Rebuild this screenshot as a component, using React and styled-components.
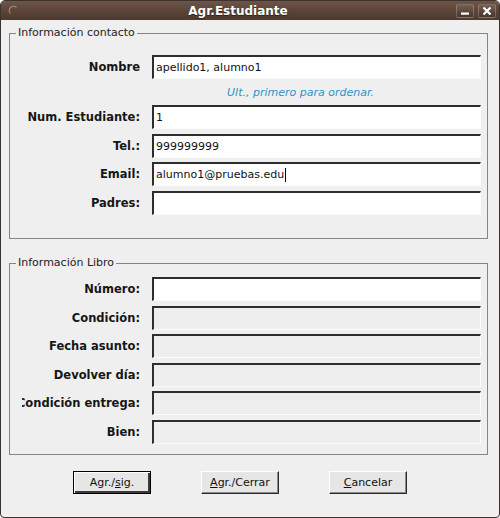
import React from "react";
import styled, { createGlobalStyle, css } from "styled-components";

const GlobalStyle = createGlobalStyle`
  html, body {
    margin: 0;
    padding: 0;
    background: #ffffff;
  }
  body {
    font-family: "DejaVu Sans", "Noto Sans", sans-serif;
    font-size: 11px;
    color: #1a1a1a;
  }
`;

const Window = styled.div`
  width: 500px;
  height: 518px;
  box-sizing: border-box;
  display: flex;
  flex-direction: column;
  border: 1px solid #3b3330;
  border-radius: 5px 5px 4px 4px;
  overflow: hidden;
  background: #efefef;
`;

const TitleBar = styled.div`
  height: 19px;
  flex: none;
  display: flex;
  align-items: center;
  padding: 0 3px 0 7px;
  background: linear-gradient(#6d5548, #584236 60%, #4e3a30);
`;

const MenuIcon = styled.svg`
  width: 12px;
  height: 12px;
  flex: none;
`;

const Title = styled.div`
  flex: 1;
  text-align: center;
  color: #ffffff;
  font-weight: bold;
  font-size: 12px;
  text-shadow: 0 1px 1px rgba(0, 0, 0, 0.5);
`;

const Controls = styled.div`
  display: flex;
  gap: 4px;
`;

const ControlButton = styled.div`
  width: 18px;
  height: 14px;
  box-sizing: border-box;
  display: flex;
  align-items: center;
  justify-content: center;
  border: 1px solid rgba(255, 255, 255, 0.22);
  border-radius: 2px;
  background: linear-gradient(rgba(255, 255, 255, 0.1), rgba(0, 0, 0, 0.12));
`;

const Body = styled.div`
  flex: 1;
  display: flex;
  flex-direction: column;
  padding: 6px 11px 0 8px;
`;

const Group = styled.fieldset`
  margin: 0;
  min-width: 0;
  border: 1px solid #858585;
  padding: ${(p) => p.$pad};
  & + & {
    margin-top: 17.5px;
  }
`;

const Legend = styled.legend`
  padding: 0 2px;
  margin-left: -2px;
  font-size: 11px;
  line-height: 14px;
  color: #222;
`;

const Rows = styled.div`
  display: flex;
  flex-direction: column;
  gap: 4.5px;
  padding-left: 4px;
`;

const Row = styled.div`
  display: grid;
  grid-template-columns: 118px 1fr;
  column-gap: 12px;
`;

const Label = styled.div`
  display: flex;
  justify-content: flex-end;
  align-items: center;
  overflow: hidden;
  white-space: nowrap;
  font-weight: bold;
  font-size: 11.5px;
  color: #161616;
`;

const Field = styled.div`
  height: 24px;
  box-sizing: border-box;
  display: flex;
  align-items: center;
  padding: 0 2px;
  border-style: solid;
  border-width: 2px 1px 1px 2px;
  border-color: #2e2e2e #fbfbfb #fbfbfb #2e2e2e;
  background: ${(p) => (p.$disabled ? "#eeeeee" : "#ffffff")};
  font-size: 11px;
  color: #111;
  white-space: nowrap;
  overflow: hidden;
`;

const Caret = styled.span`
  display: inline-block;
  width: 1px;
  height: 14px;
  margin-left: 1px;
  background: #000;
`;

const Hint = styled.div`
  grid-column: 2;
  height: 17px;
  line-height: 17px;
  text-align: center;
  padding-right: 32px;
  font-style: italic;
  font-size: 11px;
  color: #2f92c9;
`;

const ButtonRow = styled.div`
  display: flex;
  gap: 50px;
  margin-top: 16.5px;
  padding-left: 64px;
`;

const Button = styled.button`
  width: 78px;
  height: 23px;
  box-sizing: border-box;
  padding: 0;
  font-family: inherit;
  font-size: 11px;
  color: #111;
  background: #e6e6e6;
  border: 1px solid;
  border-color: #ffffff #2a2a2a #2a2a2a #ffffff;
  box-shadow: inset -1px -1px 0 #8a8a8a;
  ${(p) =>
    p.$default &&
    css`
      border-color: #000;
      box-shadow: inset 1px 1px 0 #fff, inset -2px -2px 0 #3a3a3a;
    `}
`;

const Mnemonic = styled.span`
  text-decoration: underline;
`;

const contactRows = [
  { label: "Num. Estudiante:", value: "1" },
  { label: "Tel.:", value: "999999999" },
  { label: "Email:", value: "alumno1@pruebas.edu", caret: true },
  { label: "Padres:", value: "" },
];

const bookRows = [
  { label: "Número:", disabled: false },
  { label: "Condición:", disabled: true },
  { label: "Fecha asunto:", disabled: true },
  { label: "Devolver día:", disabled: true },
  { label: "Condición entrega:", disabled: true },
  { label: "Bien:", disabled: true },
];

const App = () => {
  return (
    <>
      <GlobalStyle />
      <Window>
        <TitleBar>
          <MenuIcon viewBox="0 0 12 12">
            <path
              d="M2.5 8.5 A4 4 0 0 1 8.5 2.5"
              fill="none"
              stroke="rgba(255,255,255,0.35)"
              strokeWidth="1.2"
            />
          </MenuIcon>
          <Title>Agr.Estudiante</Title>
          <Controls>
            <ControlButton>
              <svg width="10" height="10" viewBox="0 0 10 10">
                <rect x="1" y="6.5" width="8" height="2.2" fill="#fff" />
              </svg>
            </ControlButton>
            <ControlButton>
              <svg width="10" height="10" viewBox="0 0 10 10">
                <path
                  d="M1.5 1.5 L8.5 8.5 M8.5 1.5 L1.5 8.5"
                  stroke="#fff"
                  strokeWidth="2.2"
                />
              </svg>
            </ControlButton>
          </Controls>
        </TitleBar>
        <Body>
          <Group $pad="15px 6px 23px 8px">
            <Legend>Información contacto</Legend>
            <Rows>
              <Row>
                <Label>Nombre</Label>
                <Field>apellido1, alumno1</Field>
              </Row>
              <Row>
                <Hint>Ult., primero para ordenar.</Hint>
              </Row>
              {contactRows.map((r) => (
                <Row key={r.label}>
                  <Label>{r.label}</Label>
                  <Field>
                    {r.value}
                    {r.caret && <Caret />}
                  </Field>
                </Row>
              ))}
            </Rows>
          </Group>
          <Group $pad="7px 6px 10px 8px">
            <Legend>Información Libro</Legend>
            <Rows>
              {bookRows.map((r) => (
                <Row key={r.label}>
                  <Label>{r.label}</Label>
                  <Field $disabled={r.disabled} />
                </Row>
              ))}
            </Rows>
          </Group>
          <ButtonRow>
            <Button $default>
              Agr./<Mnemonic>s</Mnemonic>ig.
            </Button>
            <Button>
              <Mnemonic>A</Mnemonic>gr./Cerrar
            </Button>
            <Button>
              <Mnemonic>C</Mnemonic>ancelar
            </Button>
          </ButtonRow>
        </Body>
      </Window>
    </>
  );
};

export default App;
